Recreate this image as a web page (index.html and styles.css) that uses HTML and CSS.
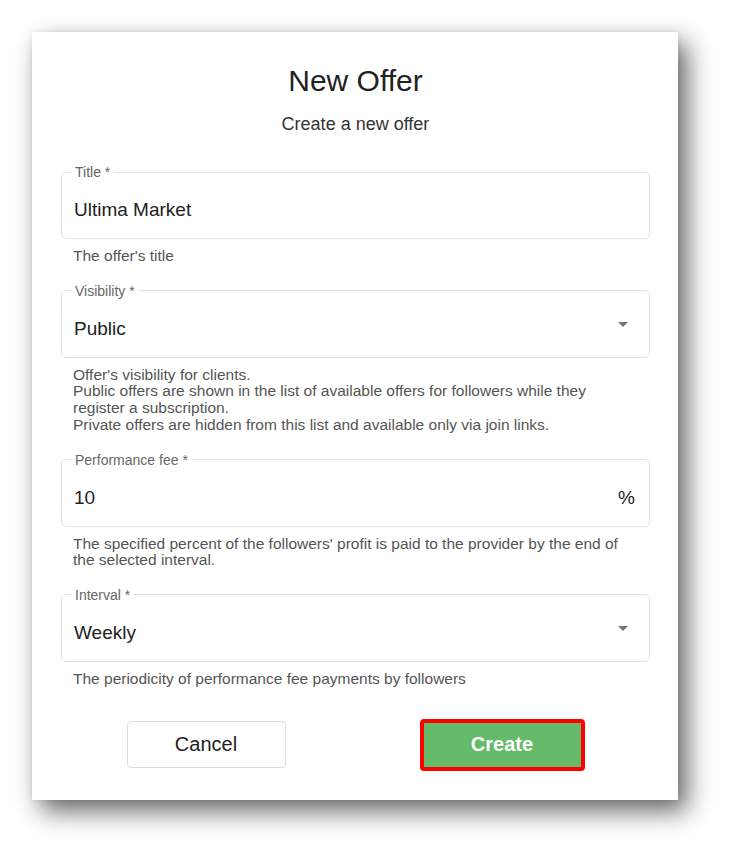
FILE: index.html
```html
<!DOCTYPE html>
<html lang="en">
<head>
    <meta charset="UTF-8">
    <meta name="viewport" content="width=device-width, initial-scale=1.0">
    <title>New Offer</title>
    <link rel="stylesheet" href="styles.css">
</head>
<body>
    <div id="offer-dialog">
        <h1 class="dialog-title">New Offer</h1>
        <p class="dialog-subtitle">Create a new offer</p>

        <div class="field">
            <fieldset class="field-box">
                <legend>Title *</legend>
                <div class="field-row">
                    <span class="field-value">Ultima Market</span>
                </div>
            </fieldset>
            <div class="field-help">The offer's title</div>
        </div>

        <div class="field">
            <fieldset class="field-box">
                <legend>Visibility *</legend>
                <div class="field-row">
                    <span class="field-value">Public</span>
                    <svg class="select-arrow" width="24" height="24" viewBox="0 0 24 24"><path d="M7 10l5 5 5-5z"/></svg>
                </div>
            </fieldset>
            <div class="field-help">
                <div>Offer's visibility for clients.</div>
                <div>Public offers are shown in the list of available offers for followers while they register a subscription.</div>
                <div>Private offers are hidden from this list and available only via join links.</div>
            </div>
        </div>

        <div class="field">
            <fieldset class="field-box">
                <legend>Performance fee *</legend>
                <div class="field-row">
                    <span class="field-value">10</span>
                    <span class="field-unit">%</span>
                </div>
            </fieldset>
            <div class="field-help">The specified percent of the followers' profit is paid to the provider by the end of the selected interval.</div>
        </div>

        <div class="field">
            <fieldset class="field-box">
                <legend>Interval *</legend>
                <div class="field-row">
                    <span class="field-value">Weekly</span>
                    <svg class="select-arrow" width="24" height="24" viewBox="0 0 24 24"><path d="M7 10l5 5 5-5z"/></svg>
                </div>
            </fieldset>
            <div class="field-help">The periodicity of performance fee payments by followers</div>
        </div>

        <div class="dialog-actions">
            <button class="btn btn-cancel">Cancel</button>
            <button class="btn btn-create">Create</button>
        </div>
    </div>
</body>
</html>
```

FILE: styles.css
```css
html, body {
    min-height: 863px;
}
body {
    margin: 0;
    background-color: #fff;
    font-family: "Liberation Sans", Arial, sans-serif;
    color: #222;
}
#offer-dialog {
    width: 646px;
    box-sizing: border-box;
    margin: 32px 0 0 32px;
    padding: 31px 28px 29px 29px;
    background-color: #fff;
    box-shadow: 0 0 6px rgba(0, 0, 0, 0.08), 9px 11px 24px rgba(0, 0, 0, 0.6);
}
.dialog-title {
    margin: 0;
    font-size: 30px;
    line-height: 36px;
    font-weight: normal;
    text-align: center;
    color: #222;
}
.dialog-subtitle {
    margin: 14px 0 29px;
    font-size: 18px;
    line-height: 22px;
    text-align: center;
    color: #333;
}
.field {
    margin-bottom: 18px;
}
.field-box {
    margin: 0;
    padding: 0 14px 0 12px;
    border: 1px solid #e2e2e2;
    border-radius: 5px;
}
.field-box legend {
    margin-left: -3px;
    padding: 0 4px;
    font-size: 14px;
    line-height: 16px;
    color: #666;
}
.field-row {
    display: flex;
    align-items: center;
    justify-content: space-between;
    padding: 18px 0 16px;
}
.field-value {
    font-size: 19px;
    line-height: 24px;
    color: #222;
}
.field-unit {
    font-size: 19px;
    line-height: 24px;
    color: #222;
}
.select-arrow {
    fill: #757575;
    margin: -10px 0 0 0;
}
.field-help {
    margin-top: 9px;
    padding: 0 14px 0 12px;
    font-size: 15.5px;
    line-height: 16.7px;
    color: #555;
}
.dialog-actions {
    display: flex;
    justify-content: center;
    align-items: center;
    gap: 134px;
    margin-top: 31px;
}
.btn {
    font-family: "Liberation Sans", Arial, sans-serif;
    font-size: 20px;
    border-radius: 4px;
    cursor: pointer;
}
.btn-cancel {
    width: 159px;
    height: 47px;
    background-color: #fff;
    border: 1px solid #ddd;
    color: #222;
}
.btn-create {
    width: 165px;
    height: 52px;
    background-color: #66bb6a;
    border: 4px solid #f00;
    color: #fff;
    font-weight: bold;
}
```
